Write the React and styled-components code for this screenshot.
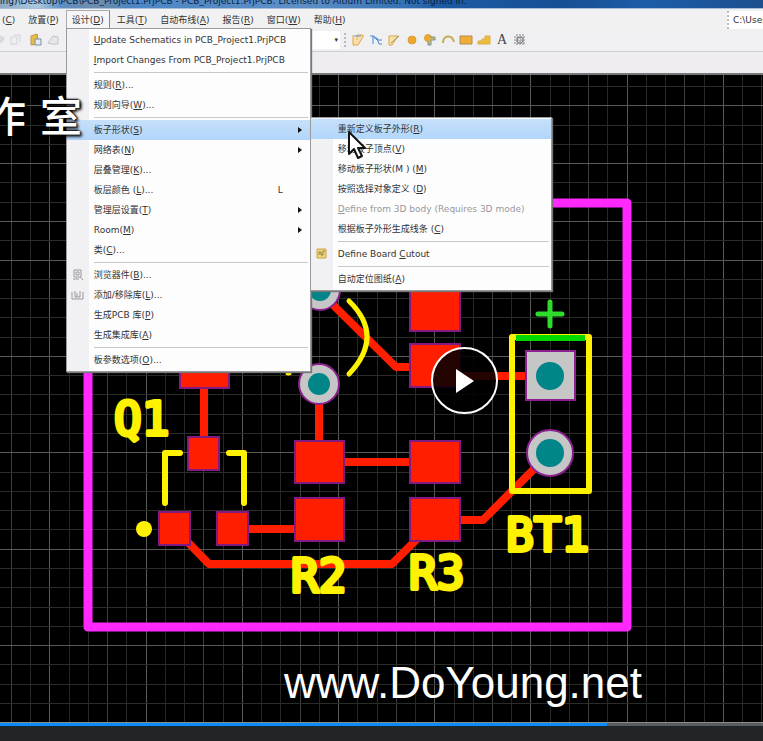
import React from "react";
import styled, { createGlobalStyle, css } from "styled-components";

const Global = createGlobalStyle`
  * { box-sizing: border-box; }
  body { margin: 0; background: #212528; overflow: hidden; }
  button, input, select { font: inherit; color: inherit; }
`;

const uiFont = `"DejaVu Sans", "Noto Sans CJK SC", sans-serif`;

const Page = styled.div`
  min-height: 100vh;
  display: flex;
  flex-direction: column;
  overflow: hidden;
  font: 9px/20px ${uiFont};
  color: #333;
`;

const TitleBar = styled.header`
  height: 9px;
  overflow: hidden;
  display: flex;
  align-items: flex-end;
  white-space: nowrap;
  font-size: 9px;
  line-height: 14px;
  color: #0b1e3c;
  border-bottom: 1px solid #a9bdd8;
  background: linear-gradient(90deg, #8da9c6 0, #a9c8de 5%, #5d8fc3 8%, #6f8caa 13%, #4c86c4 17%, #5d8fc6 40%, #3472b4 53%, #1b5aa4 58%, #174f94 74%, #1c5da8 85%, #1d4f8e 100%);
`;

const MenuBar = styled.nav`
  position: relative;
  z-index: 3;
  height: 20px;
  display: flex;
  gap: 1px;
  margin-left: -4px;
  padding-top: 1px;
  background: #f2f1f2;
`;

const MenuButton = styled.button`
  border: 0;
  border-radius: 0;
  height: 20px;
  padding: 0 6px;
  line-height: 18px;
  white-space: nowrap;
  background: transparent;
  ${(p) => p.$open && css`
    background: #f6f5f8;
    box-shadow: inset 1px 1px #aaa, inset -1px 0 #888;
  `}
`;

const MenuSlot = styled.div`
  position: relative;
`;

const PathBox = styled.input`
  width: 36px;
  height: 18px;
  margin: 1px 0 0 auto;
  padding: 0 0 0 4px;
  border: 0;
  border-left: 2px dotted #bbb;
  border-radius: 0;
  background: #fff;
`;

const ToolBar = styled.div`
  height: 23px;
  display: flex;
  align-items: center;
  gap: 4px;
  border-bottom: 1px solid #cfced2;
  background: #f0eff1;
`;

const ToolButton = styled.button`
  width: 14px;
  height: 14px;
  padding: 0;
  border: 0;
  background: none;
  svg { display: block; }
`;

const TextTool = styled(ToolButton)`
  font: 14px/14px "Liberation Serif", serif;
  color: #444;
`;

const LayerSelect = styled.button`
  width: 30px;
  height: 18px;
  margin-left: auto;
  padding: 0 2px;
  border: 0;
  background: #fff;
  font-size: 7px;
  line-height: 18px;
  text-align: right;
`;

const ToolGroup = styled.div`
  display: flex;
  align-items: center;
  gap: 4px;
  ${(p) => p.$lead
    ? css`width: 348px; margin-left: -8px;`
    : css`padding-left: 5px; border-left: 2px dotted #bbb;`}
`;

const TabStrip = styled.div`
  height: 23px;
  border-bottom: 2px solid #77777b;
  background: #efedf0;
`;

const Menu = styled.div`
  position: absolute;
  top: ${(p) => (p.$sub ? "-3px" : "18px")};
  left: ${(p) => (p.$sub ? "243px" : "0")};
  width: ${(p) => (p.$sub ? "242px" : "245px")};
  padding: 1px 0;
  border: 1px solid #9a9a9e;
  background: linear-gradient(90deg, #f1f0f3 22px, #fdfdfd 22px);
  box-shadow: 1px 1px 1px #777;
`;

const ItemRow = styled.div`
  position: relative;
`;

const MenuItem = styled.button`
  width: 100%;
  height: 20px;
  display: grid;
  grid-template-columns: 27px 1fr 20px 12px;
  align-items: center;
  padding: 0;
  border: 0;
  text-align: left;
  white-space: nowrap;
  line-height: 20px;
  color: ${(p) => (p.disabled ? "#98989c" : "#333")};
  background: ${(p) => (p.$active ? "linear-gradient(#c5e0fa, #b1d6fb)" : "transparent")};
  svg { display: block; margin-left: 4px; }
`;

const Rule = styled.hr`
  height: 1px;
  margin: 2px 2px 2px 27px;
  border: 0;
  background: #c9c9cc;
`;

const Arrow = styled.span`
  width: 0;
  height: 0;
  border: 3px solid transparent;
  border-left: 4px solid #111;
  border-right: 0;
`;

const Board = styled.main`
  position: relative;
  flex: 1;
  min-height: 0;
  display: flex;
  background: #000;
`;

const BoardDrawing = styled.svg`
  width: 100%;
  min-width: 0;
  display: block;
`;

const StudioMark = styled.div`
  position: absolute;
  z-index: 4;
  top: 11px;
  left: -16px;
  display: flex;
  gap: 14px;
  color: #fff;
  font: 500 42px/56px "Noto Sans CJK SC", sans-serif;
  text-shadow: 2px 2px 3px #000, -1px -1px 2px #000, 1px 0 2px #000;
  pointer-events: none;
`;

const SiteMark = styled.div`
  position: absolute;
  right: 121px;
  bottom: 14px;
  color: #fff;
  font: 44px/50px "Liberation Sans", Arial, sans-serif;
  text-shadow: 0 0 2px #000;
`;

const PlayButton = styled.button`
  position: absolute;
  z-index: 5;
  left: calc(50% + 49px);
  top: 272px;
  width: 67px;
  height: 67px;
  display: grid;
  place-items: center;
  padding: 0;
  border: 2px solid #fff;
  border-radius: 50%;
  background: rgba(0, 0, 0, 0.86);
`;

const CursorLayer = styled.div`
  position: absolute;
  z-index: 6;
  left: 347px;
  top: 55px;
  pointer-events: none;
`;

const Seek = styled.input`
  appearance: none;
  display: block;
  width: 100%;
  height: 4px;
  margin: 0;
  border-top: 1px solid #8a8a8a;
  background: linear-gradient(90deg, #0a8cff 79.6%, #5b5c60 79.6%);
  &::-webkit-slider-thumb { appearance: none; width: 0; height: 0; }
`;

const ControlBar = styled.footer`
  height: 15px;
  background: #212528;
`;

/* "&" marks the letter that is underlined as the access key. */
function Label({ text }) {
  const i = text.indexOf("&");
  if (i < 0) return <span>{text}</span>;
  return (
    <span>
      {text.slice(0, i)}
      <u>{text[i + 1]}</u>
      {text.slice(i + 2)}
    </span>
  );
}

const designMenu = [
  { text: "&Update Schematics in PCB_Project1.PrjPCB" },
  { text: "&Import Changes From PCB_Project1.PrjPCB" },
  null,
  { text: "规则(&R)..." },
  { text: "规则向导(&W)..." },
  null,
  { text: "板子形状(&S)", sub: true, active: true },
  { text: "网络表(&N)", sub: true },
  { text: "层叠管理(&K)..." },
  { text: "板层颜色 (&L)...", hint: "L" },
  { text: "管理层设置(&T)", sub: true },
  { text: "Room(&M)", sub: true },
  { text: "类(&C)..." },
  null,
  { text: "浏览器件(&B)...", icon: "browse" },
  { text: "添加/移除库(&L)...", icon: "library" },
  { text: "生成PCB 库(&P)" },
  { text: "生成集成库(&A)" },
  null,
  { text: "板参数选项(&O)..." },
];

const shapeMenu = [
  { text: "重新定义板子外形(&R)", active: true },
  { text: "移动板子顶点(&V)" },
  { text: "移动板子形状(M ) (&M)" },
  { text: "按照选择对象定义 (&D)" },
  { text: "&Define from 3D body (Requires 3D mode)", disabled: true },
  { text: "根据板子外形生成线条 (&C)" },
  null,
  { text: "Define Board &Cutout", icon: "cutout" },
  null,
  { text: "自动定位图纸(&A)" },
];

const icons = {
  browse: <><path d="M3 2h7v7H3zM2 11h6M5 4h3v3H5z" /><path d="M9 9l3 3" /></>,
  library: <path d="M1 4v7h11V4M4 3v6h5V3M6 9V5" />,
  cutout: <><path d="M2 2h9v9H2z" fill="#f1d477" stroke="#c9a548" /><path d="M4 8V5h2v3h2V4h2" stroke="#8b804c" /></>,
  copy: <path d="M1 4h6v7H1zM4 2h6v7" stroke="#d0d0d8" />,
  stamp: <path d="M2 9h8l2-4-4-2-3 4z" fill="#dcdce4" stroke="#d0d0d8" />,
  paste: <><path d="M3 3l6-2 2 10-8 1z" fill="#e6bd49" stroke="#bd984b" /><path d="M7 6h6v6H7z" fill="#e5e9f1" stroke="#7c8fa9" /></>,
  rubber: <path d="M2 10l5-7 5 1v7H6z" fill="#e6e6ea" stroke="#c2c2c8" />,
  route: <><path d="M2 2v10h5l5-8V2H6v5" stroke="#e5a63e" fill="#fae0ae" /><path d="M3 3h7" stroke="#7195c7" /></>,
  pair: <path d="M1 3h4l3 4h5M4 3v8M5 5h3l2 6h3" stroke="#4c86d2" fill="none" />,
  multi: <><path d="M2 3h9l-6 9H2z" fill="#fae3a7" stroke="#dda642" /><path d="M4 10l8-7" stroke="#879976" /></>,
  pad: <circle cx="7" cy="7" r="4" fill="#eca82a" stroke="#d8a040" />,
  via: <><circle cx="5" cy="5" r="3.5" fill="#efaa2b" stroke="#dba036" /><path d="M7 4h5v3H8v5H5V8" fill="#ddb24f" stroke="#6c98a4" /></>,
  arc: <path d="M2 10c0-8 9-9 11-1" stroke="#c5ae5b" fill="none" strokeWidth="2" />,
  fill: <path d="M1 3h12v8H1z" fill="#f0ad35" stroke="#b28b52" />,
  poly: <path d="M1 11V8h4V6h3V3h5v8z" fill="#efbc3a" stroke="#d9ac50" />,
  grid: <><path d="M4 1v12M7 1v12M10 1v12M1 4h12M1 7h12M1 10h12" stroke="#85858a" strokeDasharray="2 1" /><circle cx="7" cy="7" r="3" stroke="#777" /></>,
};

function Icon({ name }) {
  return (
    <svg width="14" height="14" viewBox="0 0 14 14" fill="none" stroke="#99999f" aria-hidden="true">
      {icons[name]}
    </svg>
  );
}

function MenuList({ items, sub, children }) {
  return (
    <Menu $sub={sub} role="menu">
      {items.map((it, i) =>
        it === null ? (
          <Rule key={i} />
        ) : (
          <ItemRow key={i}>
            <MenuItem role="menuitem" $active={it.active} disabled={it.disabled}>
              <span>{it.icon && <Icon name={it.icon} />}</span>
              <Label text={it.text} />
              <span>{it.hint}</span>
              {it.sub && <Arrow />}
            </MenuItem>
            {it.sub && it.active && children}
          </ItemRow>
        )
      )}
    </Menu>
  );
}

const range = (n) => Array.from({ length: n }, (_, i) => i);
const brightRows = [1, 4, 7, 9, 14, 19, 24, 29];

const pads = [
  [410, 288, 50, 43], [410, 344, 50, 43], [410, 441, 50, 42], [410, 498, 50, 43],
  [295, 441, 49, 42], [295, 498, 49, 43], [180, 345, 49, 43],
  [188, 437, 31, 33], [159, 512, 31, 33], [217, 512, 31, 33],
];

function Pcb() {
  return (
    <BoardDrawing viewBox="0 75 763 647" preserveAspectRatio="xMinYMin slice" role="img" aria-label="PCB">
      <g shapeRendering="crispEdges">
        {range(40).map((i) => (
          <path key={i} d={`M${Math.round(11 + i * 19.24)} 75v660`} stroke={i % 5 === 2 ? "#585a58" : i % 5 === 0 ? "#3c3e3c" : "#262826"} />
        ))}
        {range(34).map((i) => (
          <path key={i} d={`M0 ${Math.round(86 + i * 19.28)}h763`} stroke={brightRows.includes(i) ? "#585a58" : "#2a2c2a"} />
        ))}
      </g>
      <rect x="88" y="203" width="539" height="424" fill="none" stroke="#ff28ff" strokeWidth="9" strokeLinejoin="round" />
      <g fill="none" stroke="#ff1e00" strokeWidth="8" strokeLinejoin="round">
        <path d="M204 380v60M233 529h70M175 529l34 35h183l40-40M319 385v60M340 462h75M320 292l76 75h20M455 376h75M455 520h28l66-66" />
      </g>
      <g fill="#ff1e00" stroke="#811a83" strokeWidth="2">
        {pads.map(([x, y, w, h], i) => <rect key={i} x={x} y={y} width={w} height={h} />)}
      </g>
      <g fill="#c6c6c6" stroke="#8c2090" strokeWidth="2">
        <circle cx="320" cy="290" r="20" />
        <circle cx="319" cy="384" r="20" />
        <rect x="526" y="351" width="49" height="49" />
        <circle cx="550" cy="453" r="23" />
      </g>
      <g fill="#008589">
        <circle cx="320" cy="290" r="11" />
        <circle cx="319" cy="384" r="11" />
        <circle cx="550" cy="376" r="14" />
        <circle cx="550" cy="453" r="14" />
      </g>
      <g fill="none" stroke="#fff200" strokeWidth="6" strokeLinecap="round" strokeLinejoin="round">
        <rect x="512" y="337" width="77" height="154" />
        <path d="M180 453h-15v50M229 453h15v50" />
        <path d="M349 301q36 35 0 73M288 373h1" strokeWidth="5" />
      </g>
      <path d="M516 338h69" stroke="#00d800" strokeWidth="6" />
      <path d="M550 302v24M538 314h24" stroke="#2ddc2d" strokeWidth="5" strokeLinecap="round" />
      <circle cx="144" cy="529" r="8" fill="#fff200" />
      <g fill="#fff200" stroke="#fff200" strokeWidth="4" strokeLinejoin="round" fontFamily='"DejaVu Sans Mono", monospace' fontSize="46">
        <text x="114" y="435">Q1</text>
        <text x="291" y="592">R2</text>
        <text x="409" y="589">R3</text>
        <text x="506" y="551">BT1</text>
      </g>
    </BoardDrawing>
  );
}

const drawTools = ["route", "pair", "multi", "pad", "via", "arc", "fill", "poly"];

export default function App() {
  return (
    <Page>
      <Global />
      <TitleBar>ing)\Desktop\PCB\PCB_Project1.PrjPCB - PCB_Project1.PrjPCB. Licensed to Altium Limited. Not signed in.</TitleBar>
      <MenuBar>
        <MenuButton>(<u>C</u>)</MenuButton>
        <MenuButton><Label text="放置(&P)" /></MenuButton>
        <MenuSlot>
          <MenuButton $open aria-expanded="true"><Label text="设计(&D)" /></MenuButton>
          <MenuList items={designMenu}>
            <MenuList items={shapeMenu} sub />
          </MenuList>
        </MenuSlot>
        {["工具(&T)", "自动布线(&A)", "报告(&R)", "窗口(&W)", "帮助(&H)"].map((t) => (
          <MenuButton key={t}><Label text={t} /></MenuButton>
        ))}
        <PathBox aria-label="Path" defaultValue="C:\Users" />
      </MenuBar>
      <ToolBar>
        <ToolGroup $lead>
          {["stamp", "copy", "paste", "rubber"].map((n) => (
            <ToolButton key={n} aria-label={n}><Icon name={n} /></ToolButton>
          ))}
          <LayerSelect aria-label="Layer">▾</LayerSelect>
        </ToolGroup>
        <ToolGroup>
          {drawTools.map((n) => (
            <ToolButton key={n} aria-label={n}><Icon name={n} /></ToolButton>
          ))}
          <TextTool>A</TextTool>
          <ToolButton aria-label="grid"><Icon name="grid" /></ToolButton>
        </ToolGroup>
      </ToolBar>
      <TabStrip />
      <Board>
        <Pcb />
        <StudioMark><span>作</span><span>室</span></StudioMark>
        <SiteMark>www.DoYoung.net</SiteMark>
        <PlayButton aria-label="Play">
          <svg width="20" height="24" viewBox="0 0 20 24"><path d="M2 0v24l18-12z" fill="#fff" /></svg>
        </PlayButton>
        <CursorLayer>
          <svg width="20" height="30" viewBox="0 0 20 30">
            <path d="M2 2v22l5-5 4 9 4-2-4-8h7z" fill="#fff" stroke="#111" strokeWidth="2" strokeLinejoin="round" />
          </svg>
        </CursorLayer>
      </Board>
      <Seek type="range" aria-label="Seek" defaultValue="80" />
      <ControlBar />
    </Page>
  );
}
